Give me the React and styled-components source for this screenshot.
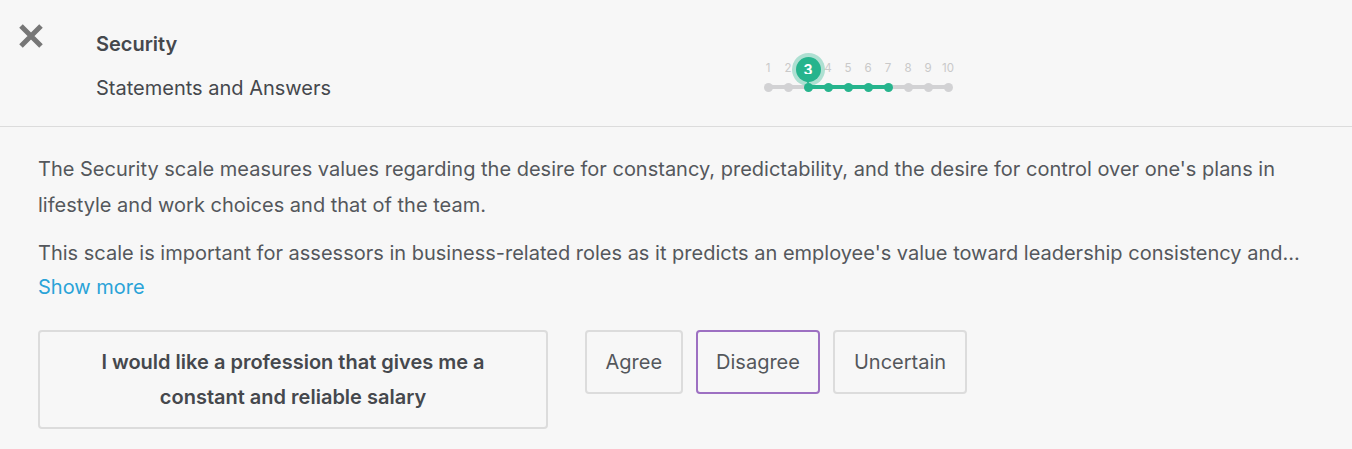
import React from 'react'
import styled, { createGlobalStyle } from 'styled-components'

const Global = createGlobalStyle`
  body {
    margin: 0;
    background: #f7f7f7;
    font-family: Inter, "Noto Sans", sans-serif;
    color: #4a4d52;
  }
`

const Header = styled.header`
  height: 126px;
  border-bottom: 1px solid #dcdcdc;
  display: flex;
`

const Close = styled.button`
  width: 30px;
  height: 30px;
  margin: 21px 0 0 16px;
  padding: 0;
  border: none;
  background: none;
  cursor: pointer;
`

const Titles = styled.div`
  margin: 30px 0 0 50px;
  width: 600px;
  h1 {
    margin: 0;
    font-size: 20px;
    font-weight: 600;
    line-height: 28px;
    color: #45484d;
  }
  p {
    margin: 16px 0 0;
    font-size: 20px;
    line-height: 28px;
    color: #45484d;
  }
`

const Scale = styled.div`
  position: relative;
  margin: 61px 0 0 72px;
  width: 200px;
  height: 40px;
`

const Nums = styled.div`
  display: flex;
  margin-left: -10px;
  font-size: 11.5px;
  color: #c9c9c9;
  line-height: 14px;
  span {
    flex: 0 0 20px;
    text-align: center;
  }
`

const Track = styled.div`
  position: relative;
  margin-top: 10px;
  width: 180px;
  height: 4px;
  background: #d2d2d4;
  border-radius: 2px;
`

const Fill = styled.div`
  position: absolute;
  top: 0;
  height: 4px;
  background: #26b48d;
`

const Dot = styled.span`
  position: absolute;
  top: -2.5px;
  width: 9px;
  height: 9px;
  margin-left: -4.5px;
  border-radius: 50%;
  background: ${p => (p.$on ? '#26b48d' : '#d2d2d4')};
`

const Pin = styled.div`
  position: absolute;
  left: 27.5px;
  top: -4px;
  width: 25px;
  height: 25px;
  border-radius: 50%;
  background: #26b48d;
  box-shadow: 0 0 0 4px rgba(38, 180, 141, 0.35);
  color: #fff;
  font-size: 14px;
  font-weight: 700;
  text-align: center;
  line-height: 25px;
  &::after {
    content: '';
    position: absolute;
    left: 6.5px;
    top: 17px;
    border-left: 6px solid transparent;
    border-right: 6px solid transparent;
    border-top: 10px solid #26b48d;
  }
`

const Body = styled.main`
  padding: 24px 38px 0;
`

const Para = styled.p`
  margin: 0 0 12px;
  font-size: 20px;
  line-height: 36px;
  color: #54575c;
  ${p => p.$clip && 'white-space: nowrap; overflow: hidden; text-overflow: ellipsis; margin: 0; width: 1262px;'}
`

const More = styled.a`
  display: block;
  font-size: 20px;
  line-height: 32px;
  color: #2aa3d8;
  cursor: pointer;
`

const Row = styled.div`
  display: flex;
  align-items: flex-start;
  margin-top: 27px;
  gap: 13px;
`

const Statement = styled.div`
  box-sizing: border-box;
  width: 510px;
  height: 99px;
  padding: 0 40px;
  margin-right: 24px;
  border: 2px solid #dcdcdc;
  border-radius: 4px;
  display: flex;
  align-items: center;
  justify-content: center;
  text-align: center;
  font-size: 20px;
  font-weight: 600;
  line-height: 35px;
  color: #45484d;
`

const Answer = styled.button`
  height: 64px;
  padding: 0 18.5px;
  border: 2px solid ${p => (p.$active ? '#9d70c2' : '#dcdcdc')};
  border-radius: 4px;
  background: transparent;
  font-family: inherit;
  font-size: 20px;
  color: #54575c;
  cursor: pointer;
`

const nums = [1, 2, 3, 4, 5, 6, 7, 8, 9, 10]

export default function App() {
  return (
    <>
      <Global />
      <Header>
        <Close aria-label="close">
          <svg width="30" height="30" viewBox="0 0 30 30">
            <path d="M5 5 L25 25 M25 5 L5 25" stroke="#777" strokeWidth="5" />
          </svg>
        </Close>
        <Titles>
          <h1>Security</h1>
          <p>Statements and Answers</p>
        </Titles>
        <Scale>
          <Nums>
            {nums.map(n => (
              <span key={n} style={{ visibility: n === 3 ? 'hidden' : 'visible' }}>{n}</span>
            ))}
          </Nums>
          <Track>
            <Fill style={{ left: 40, width: 80 }} />
            {nums.map((n, i) => (
              <Dot key={n} $on={n >= 3 && n <= 7} style={{ left: i * 20 }} />
            ))}
          </Track>
          <Pin>3</Pin>
        </Scale>
      </Header>
      <Body>
        <Para>
          The Security scale measures values regarding the desire for constancy, predictability, and the desire for control over one's plans in lifestyle and work choices and that of the team.
        </Para>
        <Para $clip>
          This scale is important for assessors in business-related roles as it predicts an employee's value toward leadership consistency and structure within the organisation and their preference for stable environments.
        </Para>
        <More>Show more</More>
        <Row>
          <Statement>I would like a profession that gives me a constant and reliable salary</Statement>
          <Answer>Agree</Answer>
          <Answer $active>Disagree</Answer>
          <Answer>Uncertain</Answer>
        </Row>
      </Body>
    </>
  )
}
